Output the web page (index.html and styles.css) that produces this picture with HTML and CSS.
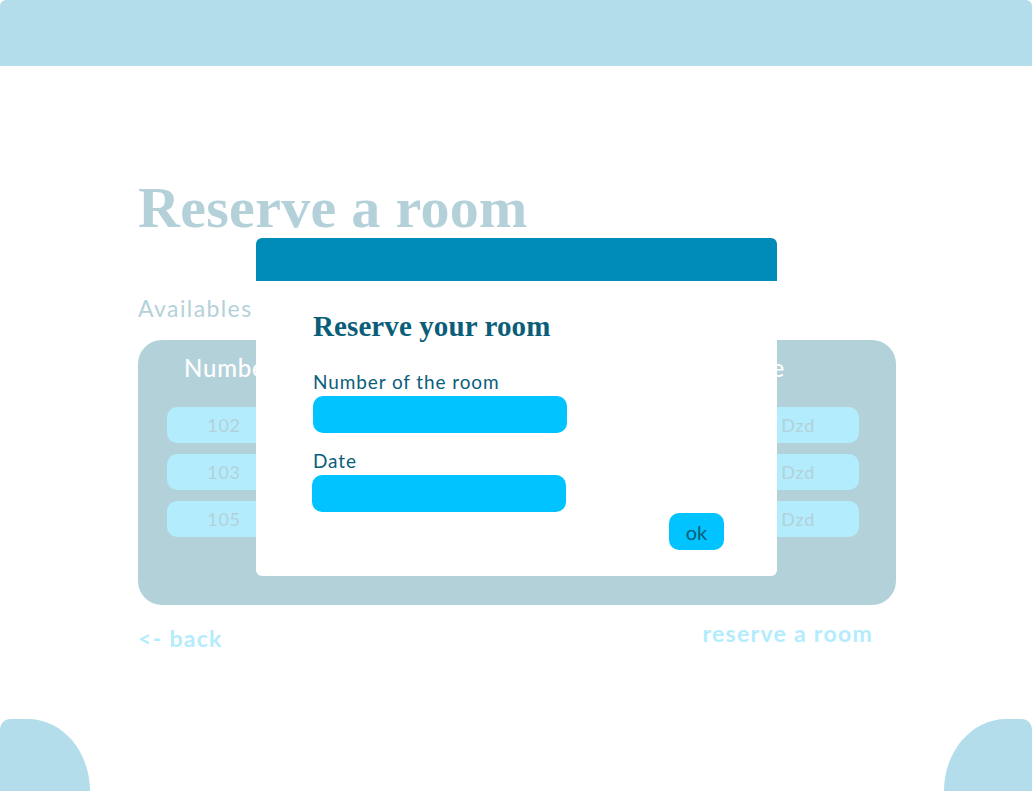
FILE: index.html
```html
<!DOCTYPE html>
<html lang="en">
<head>
<meta charset="utf-8">
<title>Reserve a room</title>
<link rel="stylesheet" href="styles.css">
</head>
<body>
<div class="page">
  <header class="topbar"></header>
  <main class="content">
    <h1 class="title">Reserve a room</h1>
    <p class="subtitle">Availables</p>
    <section class="rooms">
      <div class="rooms-head">
        <span class="col-num">Number</span>
        <span class="col-type">Type</span>
        <span class="col-price">Price</span>
      </div>
      <div class="room-row">
        <span class="col-num">102</span>
        <span class="col-type">Single</span>
        <span class="col-price">3000 Dzd</span>
      </div>
      <div class="room-row">
        <span class="col-num">103</span>
        <span class="col-type">Double</span>
        <span class="col-price">5000 Dzd</span>
      </div>
      <div class="room-row">
        <span class="col-num">105</span>
        <span class="col-type">Single</span>
        <span class="col-price">3000 Dzd</span>
      </div>
    </section>
    <nav class="links">
      <a class="link back" href="#">&lt;- back</a>
      <a class="link reserve" href="#">reserve a room</a>
    </nav>
  </main>
  <footer class="corners">
    <div class="blob blob-left"></div>
    <div class="blob blob-right"></div>
  </footer>
</div>
<div class="modal">
  <div class="modal-head"></div>
  <form class="modal-body">
    <h2 class="modal-title">Reserve your room</h2>
    <label class="field-label" for="room">Number of the room</label>
    <input class="field" id="room" type="text">
    <label class="field-label date-label" for="date">Date</label>
    <input class="field field-date" id="date" type="text">
    <button class="ok" type="button">ok</button>
  </form>
</div>
</body>
</html>
```
FILE: styles.css
```css
* { box-sizing: border-box; }
html, body { margin: 0; padding: 0; }
body {
  width: 1032px;
  height: 791px;
  overflow: hidden;
  background: #ffffff;
  font-family: "Lato", "Open Sans", sans-serif;
  position: relative;
}
.page {
  height: 791px;
  display: flex;
  flex-direction: column;
}
.topbar {
  height: 66px;
  background: #b3ddea;
  border-radius: 6px 6px 0 0;
  flex: none;
}
.content {
  padding-left: 138px;
  padding-right: 136px;
  flex: 1;
}
.title {
  margin: 113px 0 0;
  font-family: "Liberation Serif", "Times New Roman", serif;
  font-weight: 700;
  font-size: 58px;
  line-height: 58px;
  color: #b4d1d9;
  letter-spacing: 0.3px;
}
.subtitle {
  margin: 57px 0 0;
  font-size: 23px;
  line-height: 28px;
  color: #b4d1d9;
  letter-spacing: 1.4px;
}
.rooms {
  margin-top: 18px;
  height: 265px;
  background: #b3d1d9;
  border-radius: 24px;
  padding: 14px 37px 0 29px;
  display: flex;
  flex-direction: column;
  gap: 11px;
}
.rooms-head {
  display: grid;
  grid-template-columns: 1fr 1fr 1fr;
  padding-left: 17px;
  font-size: 24px;
  line-height: 28px;
  font-weight: 500;
  color: #ffffff;
  letter-spacing: 0.8px;
  margin-bottom: 14px;
}
.rooms-head .col-type { text-align: center; }
.rooms-head .col-price { text-align: right; padding-right: 74px; }
.room-row {
  height: 36px;
  background: #b3ecfc;
  border-radius: 10px;
  display: grid;
  grid-template-columns: 114px 1fr 1fr;
  align-items: center;
  font-size: 18px;
  color: #b4d1d9;
  letter-spacing: 0.7px;
}
.room-row .col-num { text-align: center; }
.room-row .col-type { text-align: center; }
.room-row .col-price { text-align: right; padding-right: 44px; }
.links {
  display: flex;
  justify-content: space-between;
  align-items: flex-start;
  margin-top: 15px;
}
.link {
  font-size: 23px;
  line-height: 27px;
  font-weight: 700;
  color: #b3ecfc;
  text-decoration: none;
  letter-spacing: 1.3px;
}
.link.back { margin-top: 5px; }
.link.reserve { margin-right: 23px; }
.corners {
  display: flex;
  justify-content: space-between;
  align-items: flex-end;
  flex: none;
}
.blob {
  width: 90px;
  height: 72px;
  background: #b3ddea;
}
.blob-left { border-radius: 10px 62px 0 0 / 10px 72px 0 0; }
.blob-right { width: 88px; border-radius: 62px 10px 0 0 / 72px 10px 0 0; }
.modal {
  position: absolute;
  left: 256px;
  top: 238px;
  width: 521px;
  height: 338px;
  background: #ffffff;
  border-radius: 6px;
  overflow: hidden;
}
.modal-head {
  height: 43px;
  background: #008cb9;
}
.modal-body {
  padding: 28px 53px 0 57px;
  display: flex;
  flex-direction: column;
  align-items: flex-start;
  margin: 0;
}
.modal-title {
  margin: 0;
  font-family: "Liberation Serif", "Times New Roman", serif;
  font-weight: 700;
  font-size: 29px;
  line-height: 34px;
  color: #0b5e7a;
  letter-spacing: 0.1px;
}
.field-label {
  margin-top: 28px;
  font-size: 19px;
  line-height: 22px;
  color: #0b5e7a;
  letter-spacing: 0.9px;
}
.date-label { margin-top: 17px; }
.field {
  margin-top: 3px;
  width: 254px;
  height: 37px;
  border: none;
  border-radius: 10px;
  background: #00c3ff;
  outline: none;
}
.field-date { margin-left: -1px; }
.ok {
  align-self: flex-end;
  margin-top: 1px;
  width: 55px;
  height: 37px;
  border: none;
  border-radius: 10px;
  background: #00c3ff;
  color: #0b5e7a;
  font-family: "Lato", "Open Sans", sans-serif;
  font-size: 20px;
  padding: 0;
}
```
